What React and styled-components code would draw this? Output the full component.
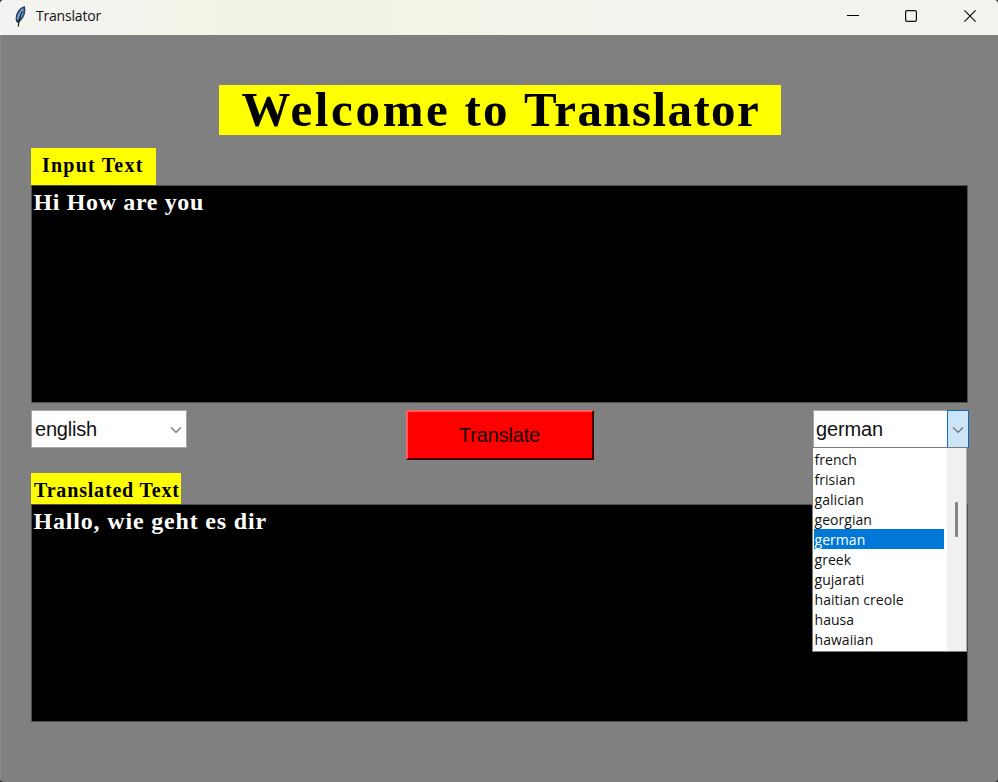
import React from "react";
import styled, { createGlobalStyle } from "styled-components";

const GlobalStyle = createGlobalStyle`
  * { box-sizing: border-box; }
  body { margin: 0; background: #242424; overflow: hidden; }
`;

const Window = styled.div`
  width: 998px;
  height: 782px;
  display: flex;
  flex-direction: column;
  background: #808080;
  border-radius: 4px;
  overflow: hidden;
`;

const TitleBar = styled.header`
  height: 35px;
  flex: none;
  display: flex;
  align-items: center;
  padding: 0 0 3px 12px;
  background: linear-gradient(90deg, #f3f3f1 0, #f3f3ee 12%, #f3f3e5 22%, #f3f3e5 38%, #f2f3ec 60%, #f2f3ed 100%);
`;

const WindowTitle = styled.span`
  margin-left: 8px;
  flex: 1;
  font: 14px/20px "Open Sans", sans-serif;
  letter-spacing: -0.2px;
  color: #111;
`;

const WindowButton = styled.button`
  width: 58px;
  height: 32px;
  display: flex;
  align-items: center;
  justify-content: center;
  padding: 0 0 0 ${(p) => p.$inset || 0}px;
  border: 0;
  background: none;
`;

const Body = styled.main`
  flex: 1;
  display: flex;
  flex-direction: column;
  align-items: flex-start;
  padding: 50px 30px 0;
  border-left: 1px solid #8b8b8b;
`;

const Heading = styled.h1`
  align-self: center;
  width: 562px;
  height: 50px;
  margin: 0 0 13px;
  padding-left: 23px;
  background: #ff0;
  color: #000;
  font: bold 49px/50px "Liberation Serif", serif;
  letter-spacing: 1.8px;
  white-space: nowrap;
`;

const Word = styled.span`
  letter-spacing: ${(p) => p.$spacing}px;
`;

const FieldLabel = styled.label`
  width: ${(p) => p.$width}px;
  height: ${(p) => p.$height}px;
  padding-left: ${(p) => p.$inset}px;
  background: #ff0;
  color: #000;
  font: bold 20px/34px "Liberation Serif", serif;
  letter-spacing: ${(p) => p.$spacing}px;
  white-space: nowrap;
`;

const TextPane = styled.div`
  align-self: stretch;
  height: 218px;
  padding: 2px 1.5px;
  border: 1px solid #505050;
  background: #000;
  color: #fff;
  font: bold 24px/28px "Liberation Serif", serif;
  letter-spacing: ${(p) => p.$spacing}px;
`;

const Controls = styled.div`
  align-self: stretch;
  height: 50px;
  display: flex;
  justify-content: space-between;
  align-items: flex-start;
  margin: 7px 0 13px;
`;

const ComboWrap = styled.div`
  position: relative;
  margin-right: ${(p) => (p.$open ? -1 : 0)}px;
`;

const Combo = styled.div`
  width: 156px;
  height: 38px;
  display: flex;
  align-items: stretch;
  border: 1px solid #a8a8a8;
  background: #fff;
  color: #111;
`;

const ComboValue = styled.span`
  flex: 1;
  padding-left: ${(p) => p.$inset}px;
  font: 20px/36px "Liberation Sans", sans-serif;
  letter-spacing: ${(p) => p.$spacing}px;
`;

const ComboArrow = styled.span`
  width: 22px;
  margin: -1px;
  display: flex;
  align-items: center;
  justify-content: center;
  padding-top: 1px;
  border: 1px solid ${(p) => (p.$active ? "#1668b8" : "transparent")};
  background: ${(p) => (p.$active ? "#cce4f7" : "none")};
`;

const TranslateButton = styled.button`
  width: 188px;
  height: 50px;
  margin-right: 1px;
  padding: 0;
  border: 2px solid;
  border-color: #ff5f5f #3c0000 #3c0000 #ff5f5f;
  background: #f00;
  color: #180000;
  font: 20px/40px "Liberation Sans", sans-serif;
  letter-spacing: -0.2px;
`;

const Menu = styled.div`
  position: absolute;
  top: 37px;
  left: -1px;
  width: 155px;
  height: 205px;
  display: flex;
  padding-top: 1px;
  border: 1px solid #7c7c7c;
  border-right-color: #aaa;
  background: #fff;
`;

const Options = styled.ul`
  width: 130px;
  margin: 0 0 0 1px;
  padding: 0;
  list-style: none;
`;

const Option = styled.li`
  height: 20px;
  padding-left: 0.5px;
  font: 14px/21px "Open Sans", sans-serif;
  letter-spacing: 0.05px;
  color: ${(p) => (p.$selected ? "#fff" : "#111")};
  background: ${(p) => (p.$selected ? "#0078d7" : "transparent")};
`;

const ScrollTrack = styled.div`
  width: 19px;
  height: 203px;
  margin: -1px 0 0 auto;
  padding: 54px 0 0 8px;
  background: #f0f0f0;
`;

const ScrollThumb = styled.div`
  width: 3px;
  height: 35px;
  background: #858585;
  border-radius: 1px;
`;

const Chevron = () => (
  <svg width="12" height="8" viewBox="0 0 12 8" fill="none" stroke="#7b7b7b" strokeWidth="1.4">
    <path d="M1 1.5 6 6.3 11 1.5" />
  </svg>
);

const Feather = () => (
  <svg width="16" height="22" viewBox="0 0 16 22">
    <path d="M12.300 1.800c1.300 4 .200 10-4.600 14.200-2.200.600-4-.500-3.400-3.500C4.800 7.500 8 3 12.300 1.800Z" fill="#4277b5" stroke="#353d48" strokeWidth="1.200" />
    <path d="M11 4.500C8.500 7 6.300 10 5.800 14M10.500 8l-2 4" fill="none" stroke="#79b1ec" strokeWidth="1.300" />
    <path d="M10.300 6.500C8 10.500 7 15 6.300 21.500M4.300 15.500l2 2" fill="none" stroke="#16191d" strokeWidth="1.200" />
  </svg>
);

const languages = [
  "french", "frisian", "galician", "georgian", "german",
  "greek", "gujarati", "haitian creole", "hausa", "hawaiian",
];

export default function App() {
  return (
    <>
      <GlobalStyle />
      <Window>
        <TitleBar>
          <Feather />
          <WindowTitle>Translator</WindowTitle>
          <WindowButton aria-label="Minimize">
            <svg width="12" height="12"><path d="M0 5.5H12" stroke="#000" /></svg>
          </WindowButton>
          <WindowButton aria-label="Maximize">
            <svg width="12" height="12"><rect x=".6" y=".6" width="10.800" height="10.800" rx="1.300" fill="none" stroke="#111" strokeWidth="1.200" /></svg>
          </WindowButton>
          <WindowButton aria-label="Close" $inset={2}>
            <svg width="12" height="12"><path d="M.4.4 11.600 11.600M11.600.4.4 11.600" stroke="#111" strokeWidth="1.200" /></svg>
          </WindowButton>
        </TitleBar>
        <Body>
          <Heading>
            <Word $spacing={2.65}>Welcome</Word> <Word $spacing={2.2}>to</Word> <Word $spacing={1.4}>Translator</Word>
          </Heading>
          <FieldLabel $width={125} $height={37} $inset={11} $spacing={1.2}>Input Text</FieldLabel>
          <TextPane $spacing={0.63}>Hi How are you</TextPane>
          <Controls>
            <ComboWrap>
              <Combo>
                <ComboValue $inset={3} $spacing={-0.2}>english</ComboValue>
                <ComboArrow><Chevron /></ComboArrow>
              </Combo>
            </ComboWrap>
            <TranslateButton>Translate</TranslateButton>
            <ComboWrap $open>
              <Combo>
                <ComboValue $inset={2} $spacing={-0.15}>german</ComboValue>
                <ComboArrow $active><Chevron /></ComboArrow>
              </Combo>
              <Menu>
                <Options>
                  {languages.map((name) => (
                    <Option key={name} $selected={name === "german"}>{name}</Option>
                  ))}
                </Options>
                <ScrollTrack><ScrollThumb /></ScrollTrack>
              </Menu>
            </ComboWrap>
          </Controls>
          <FieldLabel $width={150} $height={31} $inset={3} $spacing={0.82}>Translated Text</FieldLabel>
          <TextPane $spacing={0.82}>Hallo, wie geht es dir</TextPane>
        </Body>
      </Window>
    </>
  );
}
